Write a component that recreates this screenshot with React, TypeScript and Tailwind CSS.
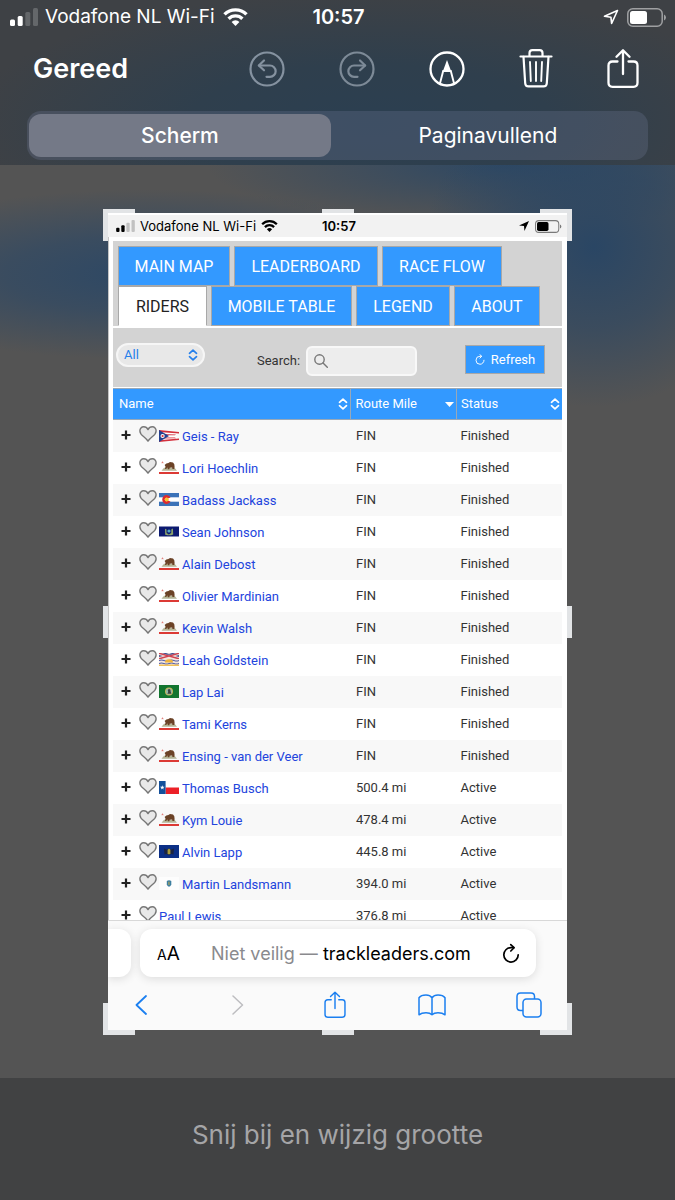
import { ReactNode, useState } from "react";

const SYSTEM_FONT = "font-['Inter','Liberation_Sans',sans-serif]";
const PAGE_FONT = "font-['Roboto','Liberation_Sans',sans-serif]";

type FlagName = "oh" | "ca" | "co" | "ny" | "bc" | "wa" | "tx" | "pa" | "ma";

type Rider = {
  name: string;
  mile: string;
  status: string;
  flag?: FlagName;
};

const RIDERS: Rider[] = [
  { name: "Geis - Ray", mile: "FIN", status: "Finished", flag: "oh" },
  { name: "Lori Hoechlin", mile: "FIN", status: "Finished", flag: "ca" },
  { name: "Badass Jackass", mile: "FIN", status: "Finished", flag: "co" },
  { name: "Sean Johnson", mile: "FIN", status: "Finished", flag: "ny" },
  { name: "Alain Debost", mile: "FIN", status: "Finished", flag: "ca" },
  { name: "Olivier Mardinian", mile: "FIN", status: "Finished", flag: "ca" },
  { name: "Kevin Walsh", mile: "FIN", status: "Finished", flag: "ca" },
  { name: "Leah Goldstein", mile: "FIN", status: "Finished", flag: "bc" },
  { name: "Lap Lai", mile: "FIN", status: "Finished", flag: "wa" },
  { name: "Tami Kerns", mile: "FIN", status: "Finished", flag: "ca" },
  { name: "Ensing - van der Veer", mile: "FIN", status: "Finished", flag: "ca" },
  { name: "Thomas Busch", mile: "500.4 mi", status: "Active", flag: "tx" },
  { name: "Kym Louie", mile: "478.4 mi", status: "Active", flag: "ca" },
  { name: "Alvin Lapp", mile: "445.8 mi", status: "Active", flag: "pa" },
  { name: "Martin Landsmann", mile: "394.0 mi", status: "Active", flag: "ma" },
  { name: "Paul Lewis", mile: "376.8 mi", status: "Active" },
];

const TAB_ROWS = [
  [
    { label: "MAIN MAP", width: "min-w-[112px]" },
    { label: "LEADERBOARD", width: "min-w-[144px]" },
    { label: "RACE FLOW", width: "min-w-[120px]" },
  ],
  [
    { label: "RIDERS", width: "min-w-[89px]" },
    { label: "MOBILE TABLE", width: "min-w-[141px]" },
    { label: "LEGEND", width: "min-w-[94px]" },
    { label: "ABOUT", width: "min-w-[86px]" },
  ],
];

/* ---------- Flags ---------- */

const FLAGS: Record<FlagName, ReactNode> = {
  oh: (
    <>
      <path d="M0 1 20 3 16 7 20 11 0 13Z" fill="#fff" />
      <path d="M0 1 20 3v1.6L0 3ZM0 5l17 .4-1 .8H0ZM0 8.4h16l1 .8L0 9.6ZM0 11.2 20 9.6V11L0 13Z" fill="#d3303c" />
      <path d="M0 1 10 7 0 13Z" fill="#23408f" />
      <circle cx="3.6" cy="7" r="2.1" fill="#fff" />
      <circle cx="3.6" cy="7" r="1.1" fill="#d3303c" />
    </>
  ),
  ca: (
    <>
      <path d="M0 11h20v2H0Z" fill="#dc3a35" />
      <path d="M3.5 0l.4.9h.9l-.7.6.3.9-.9-.5-.8.5.2-.9-.7-.6h.9Z" fill="#e2817c" />
      <path d="M5 6.800h10.500l2.500 3H2.500Z" fill="#b5b596" />
      <path d="M5.6 4 7.400 2.400l2-.4 1.600-1 3 .4 1.300 1.800.3 2.700-.4 2.100h-1.700l-.4-1.600-2.400.3-.4 1.600H8.800l-.3-1.800-1.400 1.500H6l.5-2.400Z" fill="#6b4226" />
    </>
  ),
  co: (
    <>
      <path d="M0 0h20v13H0Z" fill="#3b72b8" />
      <path d="M0 4.300h20v4.400H0Z" fill="#fff" />
      <path d="M11.500 8.600A4.400 4.400 0 1 1 11.500 4.400L8.800 5.600a1.600 1.600 0 1 0 0 1.800Z" fill="#dd2c2f" />
      <circle cx="7.700" cy="6.500" r="2" fill="#fbc531" />
    </>
  ),
  ny: (
    <>
      <path d="M0 1.500h20v10H0Z" fill="#0c1a70" />
      <path d="M6 3.800l1.400.4.2 3.800 2.200 1.600L12.200 8l.2-3.800 1.500-.6.3 6-2 .6H8.200l-2-.4Z" fill="#8ba36a" />
      <circle cx="10" cy="6" r="1.600" fill="#53a6c7" />
    </>
  ),
  bc: (
    <>
      <path d="M0 0h20v13H0Z" fill="#f6e7dd" />
      <path d="M0 0h2l8 2.300L18 0h2v1l-7 2 7 2v1h-2l-8-2.300L2 6H0V5l7-2-7-2Z" fill="#cf4352" />
      <path d="M3 0h4l3 1 3-1h4l-5 1.700H8ZM0 2l4 1-4 1ZM20 2l-4 1 4 1Z" fill="#44508f" />
      <path d="M0 7q2.500-1 5 0t5 0 5 0 5 0v1q-2.500 1-5 0t-5 0-5 0-5 0ZM0 10q2.500-1 5 0t5 0 5 0 5 0v1q-2.500 1-5 0t-5 0-5 0-5 0Z" fill="#4c5aa6" />
      <path d="M6 9.500a4 3.200 0 0 1 8 0Z" fill="#f0b43c" />
      <path d="M0 11.500h20V13H0Z" fill="#f0c05a" />
    </>
  ),
  wa: (
    <>
      <path d="M0 0h20v13H0Z" fill="#12752f" />
      <circle cx="10" cy="6.500" r="4" fill="#c9b458" />
      <circle cx="10" cy="6.500" r="3.100" fill="#8fb8a5" />
      <path d="M8.800 5q1.200-1.800 2.600-.2l.3 2 .7 2h-4l.8-1.700Z" fill="#3c4040" />
    </>
  ),
  tx: (
    <>
      <path d="M0 0h20v13H0Z" fill="#fff" />
      <path d="M6.600 6.500H20V13H6.600Z" fill="#ec2027" />
      <path d="M0 0h6.600v13H0Z" fill="#14509b" />
      <path d="m3.300 4.200.6 1.600h1.700L4.200 6.900l.5 1.700-1.400-1-1.400 1 .5-1.700L1 5.800h1.700Z" fill="#fff" />
    </>
  ),
  pa: (
    <>
      <path d="M0 0h20v13H0Z" fill="#0b2f86" />
      <path d="M5 3.500l3 1.200 2-1.500 2 1.500 3-1.200-.5 6-2.500-.4-2 1.400-2-1.400-2.500.4Z" fill="#1c2540" />
      <path d="M8.600 4.700 10 3.500l1.400 1.200v3.500L10 9.700 8.600 8.200Z" fill="#a79a3c" />
    </>
  ),
  ma: (
    <>
      <path d="M0 0h20v13H0Z" fill="#fdfdfd" />
      <path d="M7.800 4q2.300-1.600 4.500 0v3.200q-.4 2-2.300 2.600-1.800-.6-2.200-2.600Z" fill="#3d7fa0" />
      <path d="M9.300 4.800h1.300v3.300H9.300Z" fill="#a8a05e" />
    </>
  ),
};

function Flag({ name }: { name: FlagName }) {
  return (
    <svg viewBox="0 0 20 13" className="mr-[3px] h-[13px] w-5 shrink-0" aria-hidden="true">
      {FLAGS[name]}
    </svg>
  );
}

/* ---------- Status bar ---------- */

function Signal({ className }: { className: string }) {
  return (
    <svg viewBox="0 0 28 18" className={className} fill="currentColor" aria-hidden="true">
      <rect x="0" y="11.500" width="5" height="6.500" rx="1.500" />
      <rect x="7.700" y="8" width="5" height="10" rx="1.500" />
      <rect x="15.300" y="4" width="5" height="14" rx="1.500" opacity=".2" />
      <rect x="23" y="0" width="5" height="18" rx="1.500" opacity=".2" />
    </svg>
  );
}

function Wifi({ className }: { className: string }) {
  return (
    <svg viewBox="0 0 25 18" className={className} aria-hidden="true">
      <g fill="none" stroke="currentColor" strokeWidth="3.400">
        <path d="M1.500 6.400a15.600 15.600 0 0 1 22 0" />
        <path d="M5.600 10.700a9.800 9.800 0 0 1 13.800 0" />
      </g>
      <path d="M8.600 13.900a5.500 5.500 0 0 1 7.800 0L12.500 18Z" fill="currentColor" />
    </svg>
  );
}

function Battery({ className }: { className: string }) {
  return (
    <svg viewBox="0 0 40 19" className={className} aria-hidden="true">
      <rect x=".8" y=".8" width="34.400" height="17.400" rx="5" fill="none" stroke="currentColor" strokeWidth="1.500" opacity=".5" />
      <rect x="3" y="3" width="17" height="13" rx="2.500" fill="currentColor" />
      <path d="M37 6.500q2 .8 2 3t-2 3Z" fill="currentColor" opacity=".5" />
    </svg>
  );
}

/* ---------- Icons ---------- */

function UndoCircle({ flipped = false }: { flipped?: boolean }) {
  return (
    <svg viewBox="0 0 36 36" className="size-9" fill="none" stroke="currentColor" strokeWidth="2.200" strokeLinecap="round" strokeLinejoin="round" aria-hidden="true">
      <circle cx="18" cy="18" r="16.500" />
      <g transform={flipped ? "translate(36 0) scale(-1 1)" : undefined}>
        <path d="M15 9.500 9.800 14.500 15 19.300" />
        <path d="M10 14.500h11a5.600 5.600 0 0 1 0 11.300h-3.500" />
      </g>
    </svg>
  );
}

function MarkupIcon() {
  return (
    <svg viewBox="0 0 36 36" className="size-9" fill="none" stroke="currentColor" strokeWidth="2.300" aria-hidden="true">
      <circle cx="18" cy="18" r="16.500" />
      <path d="m10.800 33 3.400-13h7.600l3.400 13" strokeWidth="1.900" />
      <path d="M18 9 22.400 21h-8.800Z" fill="currentColor" stroke="none" />
    </svg>
  );
}

function TrashIcon() {
  return (
    <svg viewBox="0 0 34 40" className="h-10 w-[34px]" fill="none" stroke="currentColor" strokeWidth="2.200" strokeLinecap="round" strokeLinejoin="round" aria-hidden="true">
      <path d="M1.500 7.500h31" />
      <path d="M10.500 7V4q0-2.800 2.800-2.800h7.400q2.800 0 2.800 2.800V7" />
      <path d="m4.500 7.800 1.700 26.400q.2 3.200 3.300 3.200h15q3.100 0 3.300-3.200l1.700-26.400" />
      <path d="m11 13 .8 19M17 13v19M23 13l-.8 19" strokeWidth="1.900" />
    </svg>
  );
}

function ShareIcon({ className, width }: { className: string; width: number }) {
  return (
    <svg viewBox="0 0 32 40" className={className} fill="none" stroke="currentColor" strokeWidth={width} strokeLinecap="round" strokeLinejoin="round" aria-hidden="true">
      <path d="M10.500 12.500H5.500Q1.500 12.500 1.500 16.500v17.300q0 4 4 4h21q4 0 4-4V16.500q0-4-4-4h-5" />
      <path d="M16 25V1.500M9.500 7.800 16 1.300l6.500 6.500" />
    </svg>
  );
}

function ReloadIcon({ className }: { className: string }) {
  return (
    <svg viewBox="0 0 20 22" className={className} fill="none" stroke="currentColor" strokeWidth="1.900" strokeLinecap="round" strokeLinejoin="round" aria-hidden="true">
      <path d="M18 12.500A8 8 0 1 1 10 4.500h3" />
      <path d="m9.700 1.200 3.700 3.400-3.600 3.600" />
    </svg>
  );
}

function SortIcon({ className }: { className: string }) {
  return (
    <svg viewBox="0 0 10 12" className={className} fill="none" stroke="currentColor" strokeWidth="1.700" strokeLinecap="round" strokeLinejoin="round" aria-hidden="true">
      <path d="M1.500 4.300 5 1.100l3.500 3.200M1.500 7.700 5 10.900l3.500-3.200" />
    </svg>
  );
}

/* ---------- Editor header ---------- */

function EditorHeader() {
  const [mode, setMode] = useState<"screen" | "full">("screen");

  return (
    <header className="bg-[radial-gradient(ellipse_60%_80%_at_55%_75%,#2b3f51_0%,#2f3f4d_45%,#3e4145_100%)] pb-[5px] text-white">
      <div className="grid h-[34px] grid-cols-[1fr_auto_1fr] items-center pr-2 pl-[10px]">
        <div className="flex items-center">
          <Signal className="mr-[7px] h-[18px] w-7" />
          <span className="text-[19px] leading-6 whitespace-nowrap">Vodafone NL Wi-Fi</span>
          <Wifi className="ml-2 h-[18px] w-[25px]" />
        </div>
        <span className="text-xl leading-6 font-semibold">10:57</span>
        <div className="flex items-center justify-end gap-2">
          <svg viewBox="0 0 16 16" className="size-4" fill="none" stroke="currentColor" strokeWidth="1.600" strokeLinejoin="round" aria-hidden="true">
            <path d="M14.500 1.500 1.500 7.300l6.400.9.700 6.300Z" />
          </svg>
          <Battery className="h-[19px] w-10" />
        </div>
      </div>

      <div className="flex h-[70px] items-center justify-between pr-9 pl-[33px]">
        <button type="button" className="text-[27px] leading-8 font-semibold">
          Gereed
        </button>
        <div className="flex w-[390px] items-center justify-between">
          <button type="button" aria-label="Herstel" className="text-[#8592a0]">
            <UndoCircle />
          </button>
          <button type="button" aria-label="Opnieuw" className="text-[#7d8a97]">
            <UndoCircle flipped />
          </button>
          <button type="button" aria-label="Markeer">
            <MarkupIcon />
          </button>
          <button type="button" aria-label="Verwijder">
            <TrashIcon />
          </button>
          <button type="button" aria-label="Deel">
            <ShareIcon className="h-10 w-8" width={2.3} />
          </button>
        </div>
      </div>

      <div className="mx-[27px] mt-[7px] grid h-[49px] grid-cols-[49fr_51fr] rounded-[14px] bg-[#7680a0]/25 py-[3px] pr-[3px] pl-0.5 text-[21px] leading-7">
        <button
          type="button"
          onClick={() => setMode("screen")}
          className={`rounded-xl ${mode === "screen" ? "bg-[#747987] font-medium" : ""}`}
        >
          Scherm
        </button>
        <button
          type="button"
          onClick={() => setMode("full")}
          className={`rounded-xl ${mode === "full" ? "bg-[#747987] font-medium" : ""}`}
        >
          Paginavullend
        </button>
      </div>
    </header>
  );
}

/* ---------- Captured page ---------- */

function CaptureStatusBar() {
  return (
    <div className="grid h-6 grid-cols-[1fr_auto_1fr] items-center border-t-2 border-white bg-[#f2f2f2] pr-[5px] pl-2 text-black">
      <div className="flex items-center">
        <Signal className="mr-[5px] h-3 w-[19px]" />
        <span className="text-[13px] leading-4 whitespace-nowrap">Vodafone NL Wi-Fi</span>
        <Wifi className="ml-[5px] h-3 w-[17px]" />
      </div>
      <span className="text-[13px] leading-4 font-semibold">10:57</span>
      <div className="flex items-center justify-end gap-1.5">
        <svg viewBox="0 0 16 16" className="size-[10px]" fill="currentColor" aria-hidden="true">
          <path d="M16 0 0 7.300l8 .8.700 7.900Z" />
        </svg>
        <Battery className="h-[13px] w-[27px]" />
      </div>
    </div>
  );
}

function TabBar() {
  const [active, setActive] = useState("RIDERS");

  return (
    <nav className="bg-[#d3d3d3] px-[5px] pt-[5px]">
      {TAB_ROWS.map((row, i) => (
        <div key={i} className="flex gap-1">
          {row.map((tab) => (
            <button
              key={tab.label}
              type="button"
              onClick={() => setActive(tab.label)}
              className={`h-10 border border-[#a8a8a8] pt-0.5 text-base leading-6 whitespace-nowrap ${tab.width} ${
                active === tab.label ? "border-b-white bg-white text-[#222]" : "bg-[#3399ff] text-white"
              }`}
            >
              {tab.label}
            </button>
          ))}
        </div>
      ))}
    </nav>
  );
}

function FilterBar() {
  return (
    <div className="mt-0.5 flex items-start justify-between bg-[#d3d3d3] pt-[15px] pr-[17px] pb-[11px] pl-[3px] text-[13px] leading-4">
      <div className="relative text-[#2680eb]">
        <select
          aria-label="Filter"
          className="h-6 w-[89px] appearance-none rounded-full border-2 border-[#f6f6f6] bg-[#e8e8e8] pl-1.5 outline-none"
        >
          <option>All</option>
        </select>
        <SortIcon className="pointer-events-none absolute top-1.5 right-[7px] h-3 w-[10px]" />
      </div>
      <div className="mt-[3px] ml-1 flex items-center gap-1.5">
        <label htmlFor="rider-search" className="text-[#333]">
          Search:
        </label>
        <div className="relative">
          <input
            id="rider-search"
            type="search"
            className="h-[30px] w-[111px] rounded-md border-2 border-[#f8f8f8] bg-[#ededed] pr-2 pl-7 outline-none"
          />
          <svg viewBox="0 0 14 14" className="pointer-events-none absolute top-2 left-2 size-[14px] text-[#777]" fill="none" stroke="currentColor" strokeWidth="1.400" strokeLinecap="round" aria-hidden="true">
            <circle cx="5.500" cy="5.500" r="4.700" />
            <path d="m9 9 4.300 4.300" />
          </svg>
        </div>
      </div>
      <button
        type="button"
        className="mt-0.5 flex h-[29px] w-[80px] items-center justify-center gap-1.5 border border-[#a8a8a8] bg-[#3399ff] text-white"
      >
        <ReloadIcon className="h-[11px] w-[10px]" />
        Refresh
      </button>
    </div>
  );
}

function RiderTable() {
  return (
    <table className="mt-px w-full table-fixed border-collapse text-[13px] leading-4">
      <thead>
        <tr className="h-[31px] bg-[#3399ff] text-left text-white">
          <th className="w-[53%] border-y border-[#98a8b8] py-0 pr-0.5 pl-1.5 font-normal">
            <div className="flex items-center justify-between">
              Name
              <SortIcon className="h-3 w-[10px]" />
            </div>
          </th>
          <th className="border border-[#98a8b8] py-0 pr-0.5 pl-1 font-normal">
            <div className="flex items-center justify-between">
              Route Mile
              <svg viewBox="0 0 9 5" className="h-[5px] w-[9px]" fill="currentColor" aria-hidden="true">
                <path d="M0 0h9L4.500 5Z" />
              </svg>
            </div>
          </th>
          <th className="border-y border-[#98a8b8] py-0 pr-0.5 pl-1 font-normal">
            <div className="flex items-center justify-between">
              Status
              <SortIcon className="h-3 w-[10px]" />
            </div>
          </th>
        </tr>
      </thead>
      <tbody className="text-[#333]">
        {RIDERS.map((rider) => (
          <tr key={rider.name} className="h-8 odd:bg-[#f8f8f8]">
            <td className="p-0 pl-2">
              <div className="flex items-center">
                <button type="button" aria-label="Details" className="mr-2 pb-0.5 text-[#222]">
                  <svg viewBox="0 0 10 10" className="size-[10px]" stroke="currentColor" strokeWidth="2.200" aria-hidden="true">
                    <path d="M5 .5v9M.5 5h9" />
                  </svg>
                </button>
                <button type="button" aria-label="Favoriet" className="mr-0.5 pb-1">
                  <svg viewBox="0 0 18 16" className="h-4 w-[18px]" fill="#e8e8e8" stroke="#777" strokeWidth="1.400" strokeLinejoin="round" aria-hidden="true">
                    <path d="M9 15.200Q7.500 13 4.800 10.800 1 8 .9 5C.8 2.500 2.500.8 4.700.8 6.700.8 8.200 1.900 9 3.600 9.800 1.900 11.300.8 13.300.8c2.200 0 3.900 1.700 3.800 4.200q-.1 3-3.900 5.800Q10.500 13 9 15.200Z" />
                  </svg>
                </button>
                {rider.flag && <Flag name={rider.flag} />}
                <a href="#" className="pt-[3px] whitespace-nowrap text-[#2244dd]">
                  {rider.name}
                </a>
              </div>
            </td>
            <td className="p-0 pl-[5px]">{rider.mile}</td>
            <td className="p-0 pl-1">{rider.status}</td>
          </tr>
        ))}
      </tbody>
    </table>
  );
}

function SafariBar() {
  return (
    <div className="overflow-hidden border-t border-[#d8d8d8] bg-[#fafafa] pt-2">
      <div className="flex h-12 gap-[9px] pr-[31px]">
        <div className="w-[23px] rounded-r-xl bg-white shadow-[0_2px_10px_rgba(0,0,0,0.12)]" />
        <div className="flex flex-1 items-center justify-between rounded-xl bg-white pt-0.5 pr-4 pl-[17px] text-black shadow-[0_2px_10px_rgba(0,0,0,0.12)]">
          <button type="button" className="text-[19px] leading-6">
            <span className="text-sm">A</span>A
          </button>
          <span className="text-[18px] leading-6 whitespace-nowrap">
            <span className="text-[#8a8a8e]">Niet veilig — </span>trackleaders.com
          </span>
          <button type="button" aria-label="Laad opnieuw" className="pb-0.5">
            <ReloadIcon className="h-[21px] w-[18px]" />
          </button>
        </div>
      </div>
      <div className="flex h-[53px] items-center justify-between pt-0.5 pr-6 pl-[19px] text-[#1b7ff0]">
        <button type="button" aria-label="Vorige" className="flex w-7 justify-center">
          <svg viewBox="0 0 12 20" className="h-5 w-3" fill="none" stroke="currentColor" strokeWidth="1.800" strokeLinecap="round" strokeLinejoin="round" aria-hidden="true">
            <path d="M11 1 1.500 10 11 19" />
          </svg>
        </button>
        <button type="button" aria-label="Volgende" className="flex w-7 justify-center text-[#bdbdc0]">
          <svg viewBox="0 0 12 20" className="h-5 w-3" fill="none" stroke="currentColor" strokeWidth="1.500" strokeLinecap="round" strokeLinejoin="round" aria-hidden="true">
            <path d="M1 1l9.500 9L1 19" />
          </svg>
        </button>
        <button type="button" aria-label="Deel" className="flex w-7 justify-center">
          <ShareIcon className="h-7 w-[22px]" width={2.1} />
        </button>
        <button type="button" aria-label="Bladwijzers" className="flex w-7 justify-center">
          <svg viewBox="0 0 28 22" className="h-[22px] w-7" fill="none" stroke="currentColor" strokeWidth="1.500" strokeLinejoin="round" aria-hidden="true">
            <path d="M14 3.800Q12 1 8 1 3 1 1 3.800v17Q3.500 18.800 8 18.800q4 0 6 2 2-2 6-2 4.500 0 7 2v-17Q25 1 20 1q-4 0-6 2.800ZM14 3.800v17" />
          </svg>
        </button>
        <button type="button" aria-label="Tabbladen" className="flex w-7 justify-center">
          <svg viewBox="0 0 26 26" className="size-[26px]" fill="none" stroke="currentColor" strokeWidth="1.500" strokeLinejoin="round" aria-hidden="true">
            <path d="M7 18.500H4.500Q1 18.500 1 15V4.500Q1 1 4.500 1H15q3.500 0 3.500 3.500V7" />
            <rect x="7" y="7" width="18" height="18" rx="3.500" />
          </svg>
        </button>
      </div>
    </div>
  );
}

function CropHandles() {
  return (
    <>
      <span className="absolute -top-1 -left-[5px] h-8 w-8 bg-[#e2e4e6]" />
      <span className="absolute -top-1 left-1/2 h-8 w-8 -translate-x-1/2 bg-[#e2e4e6]" />
      <span className="absolute -top-1 -right-[5px] h-8 w-8 bg-[#e2e4e6]" />
      <span className="absolute top-1/2 -left-[5px] h-8 w-8 -translate-y-1/2 bg-[#e2e4e6]" />
      <span className="absolute top-1/2 -right-[5px] h-8 w-8 -translate-y-1/2 bg-[#e2e4e6]" />
      <span className="absolute -bottom-[5px] -left-[5px] h-8 w-8 bg-[#e2e4e6]" />
      <span className="absolute -bottom-[5px] left-1/2 h-8 w-8 -translate-x-1/2 bg-[#e2e4e6]" />
      <span className="absolute -right-[5px] -bottom-[5px] h-8 w-8 bg-[#e2e4e6]" />
    </>
  );
}

export default function App() {
  return (
    <div className={`flex min-h-screen flex-col bg-[#545454] ${SYSTEM_FONT}`}>
      <EditorHeader />

      <main className="flex-1 bg-[radial-gradient(ellipse_170px_160px_at_88%_9%,#2a4664_0%,#2a466499_50%,#2a466400_100%),radial-gradient(ellipse_320px_85px_at_22%_12%,#2d4865_0%,#2d4865aa_45%,#2d486500_100%),radial-gradient(ellipse_300px_60px_at_75%_0%,#2e4863_0%,#2e486300_100%)] px-[108px] py-12">
        <div className="relative">
          <CropHandles />
          <div className="relative bg-white">
            <CaptureStatusBar />
            {/* the last row runs under the browser bar */}
            <div className={`h-[683px] overflow-hidden border-l border-[#c4c4c4] pt-1 pr-[5px] pl-1 ${PAGE_FONT}`}>
              <TabBar />
              <FilterBar />
              <RiderTable />
            </div>
            <SafariBar />
          </div>
        </div>
      </main>

      <footer className="flex h-[122px] items-center justify-center bg-[#414243] pb-2">
        <p className="text-[26px] leading-8 text-[#a5a5a7]">Snij bij en wijzig grootte</p>
      </footer>
    </div>
  );
}
